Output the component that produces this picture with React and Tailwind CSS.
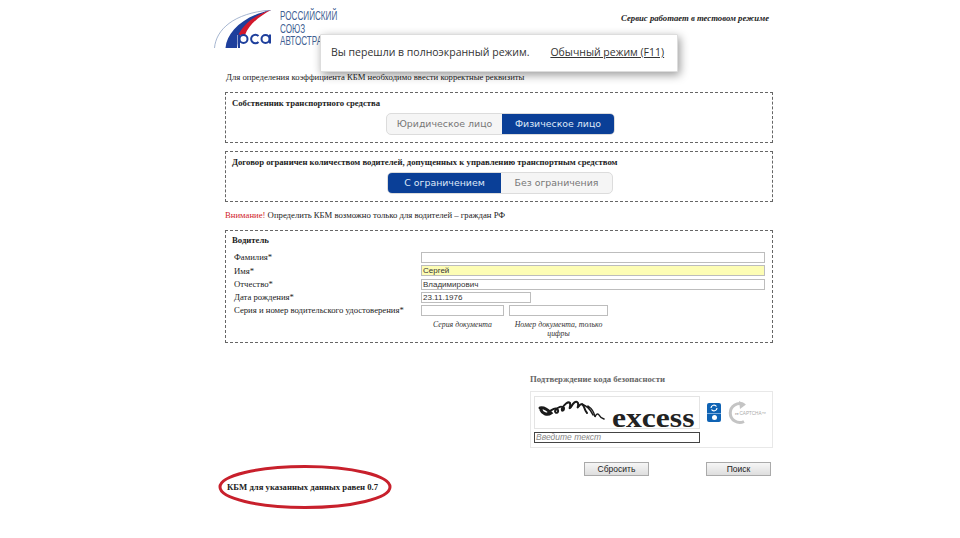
import React from 'react';

const serif = "font-['Liberation_Serif',serif]";
const sans = "font-['Liberation_Sans',Arial,sans-serif]";

const Segment = ({ left, right, active, width, leftW }) => (
  <div className={`flex h-[22px] rounded-[5px] border border-[#dcdcdc] bg-[#f5f5f5] overflow-hidden ${width} font-['DejaVu_Sans',sans-serif] text-[9.400px]`}>
    <div className={`${leftW} flex items-center justify-center ${active === 0 ? 'bg-[#0a3f97] text-[#dfe8f8] font-medium' : 'text-[#777777]'}`}>{left}</div>
    <div className={`flex-1 flex items-center justify-center ${active === 1 ? 'bg-[#0a3f97] text-[#dfe8f8] font-medium' : 'text-[#777777]'}`}>{right}</div>
  </div>
);

const Field = ({ label, value, bg = 'bg-white', w = 'w-[344px]' }) => (
  <div className="flex items-center h-[13.250px]">
    <div className="w-[189px] pl-[2px] text-[8.700px] text-[#222222] leading-none whitespace-nowrap">{label}</div>
    <div className={`${w} h-[11px] border border-[#bdbdbd] ${bg} ${sans} text-[8px] leading-[9px] pl-[1px] text-[#333333]`}>{value}</div>
  </div>
);

const PcaLogo = () => (
  <svg width="60" height="38" viewBox="0 0 60 38">
    <path d="M1.500 38 C3 20 20 3 58 0" fill="none" stroke="#8fa3c4" strokeWidth="0.8" />
    <path d="M12.500 38 C14 22 30 6 58 0 C42 6 28 16 24 38 Z" fill="#1e3f9c" />
    <path d="M25 26 C30 14 42 5 58 0 C47 6 36 14 32 25 Z" fill="#d3182c" />
    <rect x="24.500" y="25" width="35" height="13" fill="#ffffff" />
    <path d="M26 24.500 V38" stroke="#1e3f9c" strokeWidth="2" />
    <circle cx="30.500" cy="29" r="4" fill="none" stroke="#1e3f9c" strokeWidth="2" />
    <path d="M45.500 26 A4.300 4.300 0 1 0 45.500 32" fill="none" stroke="#1e3f9c" strokeWidth="2" />
    <circle cx="52.500" cy="29" r="4" fill="none" stroke="#1e3f9c" strokeWidth="2" />
    <path d="M57 24.500 V33.500" stroke="#1e3f9c" strokeWidth="2" />
  </svg>
);

const CaptchaImage = () => (
  <div className="relative w-[166px] h-[33px] border border-[#e4e4e4] bg-white">
    <svg width="72" height="30" viewBox="0 0 72 30" className="absolute left-[3px] top-[1px]">
      <path d="M2 10 C6 9 10 12 13 15 C9 18 4 15 3 12" fill="none" stroke="#1a1a1a" strokeWidth="3" strokeLinecap="round" />
      <path d="M10 15 C14 11 18 9 20 12 C21 15 17 16 17 13 C20 8 24 8 26 10 C26 13 23 14 24 10 C27 6 30 3 32 5 C33 9 30 12 33 9 C35 5 38 2 40 5 C41 9 38 11 41 8 C43 5 45 6 46 9 C47 12 48 14 49 15" fill="none" stroke="#1a1a1a" strokeWidth="2" strokeLinecap="round" />
      <path d="M44 6 C48 8 52 10 55 17 M50 8 C53 10 56 13 57 19 C58 16 60 15 61 17 C62 19 63 20 66 21" fill="none" stroke="#1a1a1a" strokeWidth="1.500" strokeLinecap="round" />
    </svg>
    <span className={`absolute left-[77px] top-[11px] ${serif} font-bold text-[27px] leading-[20px] scale-x-[1.17] origin-left text-[#222222]`}>excess</span>
  </div>
);

const RecaptchaLogo = () => (
  <svg width="42" height="24" viewBox="0 0 42 24">
    <path d="M17 3.500 A9.500 9.500 0 1 0 17 20.500" fill="none" stroke="#c4c4c4" strokeWidth="3" />
    <path d="M12 0 L19 3.500 L13 8 Z" fill="#c4c4c4" />
    <text x="8" y="13.500" fontSize="4" fontFamily="Liberation Sans" fill="#a8a8a8" fontWeight="700">re</text>
    <text x="12.500" y="13.500" fontSize="4.600" fontFamily="Liberation Sans" fill="#aaaaaa">CAPTCHA™</text>
  </svg>
);

export default function App() {
  return (
    <div className={`relative w-[960px] h-[538px] bg-white overflow-hidden ${serif} text-[#222222]`}>
      <div className="w-[548px] ml-[225px]">
        {/* Шапка */}
        <div className="flex h-[72px] -ml-[12px] pt-[10px]">
          <PcaLogo />
          <div className={`ml-[7px] text-[#3f5f93] ${sans} text-[12.500px] leading-[12.500px] scale-x-[0.65] origin-top-left w-[120px] whitespace-nowrap`}>
            <div>РОССИЙСКИЙ</div>
            <div>СОЮЗ</div>
            <div>АВТОСТРАХОВЩИКОВ</div>
          </div>
          <div className="ml-auto mt-[3px] mr-[4px] text-[8.700px] leading-[11px] font-bold italic text-[#222222]">Сервис работает в тестовом режиме</div>
        </div>

        <div className="text-[8.700px] leading-[11px] pl-[1px] mb-[9px]">Для определения коэффициента КБМ необходимо ввести корректные реквизиты</div>

        <div className="h-[51px] border border-dashed border-[#666666] px-[6px] pt-[5px]">
          <div className="font-bold text-[8.700px] leading-[11px]">Собственник транспортного средства</div>
          <div className="flex ml-[154px] mt-[4px]">
            <Segment left="Юридическое лицо" right="Физическое лицо" active={1} width="w-[229px]" leftW="w-[115px]" />
          </div>
        </div>

        <div className="h-[51px] mt-[8px] border border-dashed border-[#666666] px-[6px] pt-[5px]">
          <div className="font-bold text-[8.700px] leading-[11px]">Договор ограничен количеством водителей, допущенных к управлению транспортным средством</div>
          <div className="flex ml-[155px] mt-[4px]">
            <Segment left="С ограничением" right="Без ограничения" active={0} width="w-[226px]" leftW="w-[113px]" />
          </div>
        </div>

        <div className="text-[8.700px] leading-[11px] mt-[8px] mb-[9px]">
          <span className="text-[#d0232a]">Внимание!</span> Определить КБМ возможно только для водителей – граждан РФ
        </div>

        <div className="h-[113px] border border-dashed border-[#666666] px-[6px] pt-[4px]">
          <div className="font-bold text-[8.700px] leading-[11px] mb-[5px]">Водитель</div>
          <Field label="Фамилия*" />
          <Field label="Имя*" value="Сергей" bg="bg-[#fdfdb4]" />
          <Field label="Отчество*" value="Владимирович" />
          <Field label="Дата рождения*" value="23.11.1976" w="w-[110px]" />
          <div className="flex items-center h-[13.250px]">
            <div className="w-[189px] pl-[2px] text-[8.700px] text-[#222222] leading-none whitespace-nowrap">Серия и номер водительского удостоверения*</div>
            <div className="w-[83px] h-[11px] border border-[#bdbdbd] bg-white" />
            <div className="w-[99px] h-[11px] ml-[5px] border border-[#bdbdbd] bg-white" />
          </div>
          <div className="flex ml-[189px] mt-[2px] italic text-[7.800px] leading-[9px] text-[#333333] text-center">
            <div className="w-[83px] pt-[1px]">Серия документа</div>
            <div className="w-[99px] ml-[5px] pt-[1px]">Номер документа, только цифры</div>
          </div>
        </div>

        {/* Капча */}
        <div className="ml-[305px] mt-[31px] w-[243px]">
          <div className="font-bold text-[8.700px] leading-[11px] text-[#666666]">Подтверждение кода безопасности</div>
          <div className="mt-[6px] h-[57px] border border-[#e8e8e8] pl-[3px] pt-[4px] flex">
            <div className="flex flex-col gap-[3px]">
              <CaptchaImage />
              <div className={`w-[166px] h-[11px] border border-[#444444] ${sans} italic text-[8.500px] leading-[9px] pl-[1px] text-[#888888]`}>Введите текст</div>
            </div>
            <div className="flex flex-col mt-[7px] ml-[7px] w-[14px] h-[19px] rounded-[2px] bg-[#0f63b4] overflow-hidden items-center">
              <svg width="14" height="10" viewBox="0 0 14 10">
                <path d="M4 5 A3 3 0 0 1 9.500 3.500 M10 5 A3 3 0 0 1 4.500 6.500" fill="none" stroke="#ffffff" strokeWidth="1.200" />
              </svg>
              <div className="w-full h-[1px] bg-[#7fb0df]" />
              <div className="w-[5px] h-[5px] rounded-full bg-white mt-[1px]" />
            </div>
            <div className="ml-[6px] mt-[5px]"><RecaptchaLogo /></div>
          </div>
          <div className={`flex mt-[14px] ${sans} text-[8.500px]`}>
            <button className="ml-[54px] w-[65px] h-[14px] border border-[#aaaaaa] bg-linear-to-b from-[#f6f6f6] to-[#dedede] leading-none text-[#222222]">Сбросить</button>
            <button className="ml-[57px] w-[65px] h-[14px] border border-[#aaaaaa] bg-linear-to-b from-[#f6f6f6] to-[#dedede] leading-none text-[#222222]">Поиск</button>
          </div>
        </div>

        <div className="font-bold text-[8.700px] leading-[11px] ml-[2px] mt-[6px]">КБМ для указанных данных равен 0.7</div>
      </div>

      {/* Красный овал */}
      <svg width="176" height="48" viewBox="0 0 176 48" className="absolute left-[217px] top-[463px]">
        <ellipse cx="88" cy="24" rx="85" ry="20.500" fill="none" stroke="#c8202c" strokeWidth="3" />
      </svg>

      {/* Уведомление браузера */}
      <div className="absolute left-[320px] top-[34px] w-[358px] h-[38px] bg-white rounded-[1px] border border-[#dddddd] shadow-[2px_3px_10px_rgba(0,0,0,0.4)] flex items-center pl-[10px] font-['Open_Sans',sans-serif] text-[10.500px] text-[#333333] whitespace-nowrap">
        <span>Вы перешли в полноэкранный режим.</span>
        <span className="ml-[21px] underline">Обычный режим (F11)</span>
      </div>
    </div>
  );
}
